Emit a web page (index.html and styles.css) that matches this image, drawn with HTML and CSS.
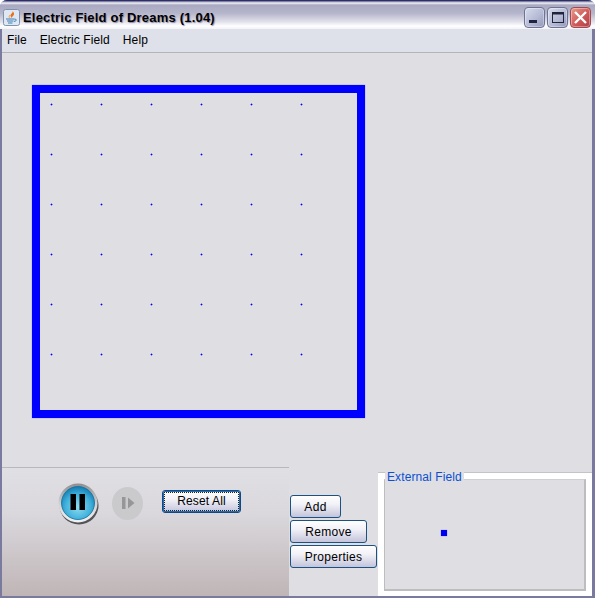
FILE: index.html
```html
<!DOCTYPE html>
<html lang="en">
<head>
<meta charset="utf-8">
<title>Electric Field of Dreams (1.04)</title>
<link rel="stylesheet" href="styles.css">
</head>
<body>
<div class="window">
  <header class="titlebar">
    <svg class="app-icon" width="17" height="17" viewBox="0 0 17 17">
      <rect x="0.5" y="0.5" width="16" height="16" rx="2" fill="#dfe8f2" stroke="#7f93ad"/>
      <path d="M9.5 2C10.5 4 7 5 7.5 7C7.8 8.2 9 9 9 9C8.5 7.5 11.5 6.5 11 4.5C10.8 3.5 10 2.6 9.5 2Z" fill="#e8701a"/>
      <path d="M7 6C5.8 7 5.8 8.2 7 9.4" fill="none" stroke="#f0a040"/>
      <path d="M3 10H11.5M4 12H10.5M5 14H9.5" stroke="#3f7fb5" stroke-width="1.2"/>
      <path d="M11.5 10.2C14 9.8 14 12.2 11 12.4" fill="none" stroke="#3f7fb5"/>
    </svg>
    <h1 class="title">Electric Field of Dreams (1.04)</h1>
    <div class="win-controls">
      <div class="win-btn">
        <svg width="19" height="19" viewBox="0 0 19 19"><rect x="4" y="12" width="8" height="3" fill="#20243c"/></svg>
      </div>
      <div class="win-btn">
        <svg width="19" height="19" viewBox="0 0 19 19"><rect x="4.5" y="4.5" width="11" height="10" fill="none" stroke="#20243c"/><rect x="4" y="4" width="12" height="2.5" fill="#20243c"/></svg>
      </div>
      <div class="win-btn win-close">
        <svg width="19" height="19" viewBox="0 0 19 19"><path d="M4 4L15 15M15 4L4 15" stroke="#fff" stroke-width="2.4"/></svg>
      </div>
    </div>
  </header>
  <nav class="menubar">
    <span class="menu-item">File</span>
    <span class="menu-item">Electric Field</span>
    <span class="menu-item">Help</span>
  </nav>
  <main class="content">
    <section class="stage">
      <div class="field">
        <i class="dot"></i><i class="dot"></i><i class="dot"></i><i class="dot"></i><i class="dot"></i><i class="dot"></i>
        <i class="dot"></i><i class="dot"></i><i class="dot"></i><i class="dot"></i><i class="dot"></i><i class="dot"></i>
        <i class="dot"></i><i class="dot"></i><i class="dot"></i><i class="dot"></i><i class="dot"></i><i class="dot"></i>
        <i class="dot"></i><i class="dot"></i><i class="dot"></i><i class="dot"></i><i class="dot"></i><i class="dot"></i>
        <i class="dot"></i><i class="dot"></i><i class="dot"></i><i class="dot"></i><i class="dot"></i><i class="dot"></i>
        <i class="dot"></i><i class="dot"></i><i class="dot"></i><i class="dot"></i><i class="dot"></i><i class="dot"></i>
      </div>
    </section>
    <section class="bottom">
      <div class="transport">
        <svg class="pause" width="42" height="42" viewBox="0 0 42 42">
          <defs>
            <radialGradient id="blue" cx="50%" cy="62%" r="60%">
              <stop offset="0" stop-color="#8fdcf2"/>
              <stop offset="0.65" stop-color="#3fb0da"/>
              <stop offset="1" stop-color="#167fb4"/>
            </radialGradient>
            <linearGradient id="ring" x1="0" y1="0" x2="0" y2="1">
              <stop offset="0" stop-color="#8e8e90"/>
              <stop offset="0.5" stop-color="#d0d0d2"/>
              <stop offset="1" stop-color="#f2f2f2"/>
            </linearGradient>
          </defs>
          <ellipse cx="21" cy="22.5" rx="19.5" ry="19" fill="#3c3c40" opacity="0.85"/>
          <circle cx="20" cy="20" r="19.5" fill="url(#ring)"/>
          <circle cx="20" cy="20" r="16.5" fill="url(#blue)" stroke="#0f6f9f" stroke-width="0.8"/>
          <rect x="12.5" y="11" width="5.5" height="16" fill="#000"/>
          <rect x="21.5" y="11" width="5.5" height="16" fill="#000"/>
        </svg>
        <svg class="step" width="31" height="33" viewBox="0 0 31 33">
          <ellipse cx="15.5" cy="16.5" rx="15.5" ry="16.5" fill="#cacacd"/>
          <rect x="10" y="10" width="3.5" height="12" fill="#969698"/>
          <path d="M16 10.5L22.5 16L16 21.5Z" fill="#969698"/>
        </svg>
        <button class="btn btn-reset" type="button"><span class="focus-ring">Reset All</span></button>
      </div>
      <div class="actions">
        <button class="btn btn-add" type="button">Add</button>
        <button class="btn btn-remove" type="button">Remove</button>
        <button class="btn btn-props" type="button">Properties</button>
      </div>
      <div class="external">
        <span class="external-title">External Field</span>
        <div class="external-inner"><i class="charge"></i></div>
      </div>
    </section>
  </main>
</div>
</body>
</html>
```
FILE: styles.css
```css
* { box-sizing: border-box; }
html, body { margin: 0; padding: 0; background: #fff; }
body { width: 597px; height: 600px; overflow: hidden; font-family: "Liberation Sans", Arial, sans-serif; font-size: 12px; color: #000; }

.window {
  width: 595px;
  height: 598px;
  display: flex;
  flex-direction: column;
  background: #7a7a9e;
  border-radius: 7px 7px 0 0;
  overflow: hidden;
}

.titlebar {
  height: 29px;
  flex: none;
  display: flex;
  align-items: center;
  padding: 5px 4px 0 3px;
  border-top: 1px solid #2c2f66;
  background: linear-gradient(to bottom, #5b5b8c 0, #f4f4f8 2px, #a9a9c2 4px, #b4b4ca 12px, #e2e2ec 21px, #ffffff 25px, #f2f2f8 28px);
}
.app-icon { flex: none; display: block; }
.title {
  margin: 0 0 0 3px;
  font-family: "Liberation Sans", sans-serif;
  font-size: 13px;
  font-weight: bold;
  line-height: 18px;
  color: #000;
  letter-spacing: 0.2px;
  text-shadow: 1px 1px 1px #8c8ca8;
  white-space: nowrap;
}
.win-controls { margin-left: auto; display: flex; gap: 2px; }
.win-btn {
  width: 21px;
  height: 21px;
  border: 1px solid #6d7392;
  border-radius: 4px;
  background: linear-gradient(135deg, #d8dcec 0%, #b6bbd6 55%, #9398ba 100%);
  box-shadow: inset 0 0 0 1px rgba(255,255,255,.35);
}
.win-btn svg { display: block; margin: 0; }
.win-close {
  border-color: #a04a50;
  background: linear-gradient(135deg, #e89a8e 0%, #cf5a58 55%, #b23c44 100%);
}

.menubar {
  height: 24px;
  flex: none;
  margin: 0 3px 0 2px;
  display: flex;
  align-items: center;
  gap: 13px;
  padding: 0 0 1px 5px;
  background: #dfe1ea;
  border-bottom: 1px solid #b4b4b8;
  letter-spacing: 0.1px;
}

.content {
  flex: 1;
  display: flex;
  flex-direction: column;
  margin: 0 3px 2px 2px;
  background: #dfdee3;
  min-height: 0;
}

.stage { height: 414px; flex: none; padding: 32px 0 0 30px; }
.field {
  width: 333px;
  height: 333px;
  border: 8px solid #0000ff;
  padding: 10px 0 0 10px;
  display: grid;
  grid-template-columns: repeat(6, 50px);
  grid-auto-rows: 50px;
  box-shadow: 0 0 1px #6a6af0;
}
.dot {
  display: block;
  width: 1px;
  height: 1px;
  margin: 1px 0 0 1px;
  background: #0000ff;
  box-shadow: 1px 0 rgba(40, 40, 255, .45), -1px 0 rgba(40, 40, 255, .45), 0 1px rgba(40, 40, 255, .45), 0 -1px rgba(40, 40, 255, .45);
}

.bottom { flex: 1; display: flex; min-height: 0; }

.transport {
  width: 287px;
  flex: none;
  display: flex;
  align-items: flex-start;
  padding: 15px 0 0 56px;
  border-top: 1px solid #b9b8bd;
  background: linear-gradient(to bottom, #e0dfe4 0%, #dad8dd 35%, #bfb5b6 100%);
}
.pause { flex: none; display: block; }
.step { flex: none; display: block; margin: 4px 0 0 12px; }

.btn {
  display: block;
  height: 23px;
  padding: 0;
  border: 1px solid #1c527f;
  border-radius: 3px;
  background: linear-gradient(to bottom, #ffffff 0%, #f1f1f7 40%, #c4c4dc 100%);
  font-family: "Liberation Sans", Arial, sans-serif;
  font-size: 12px;
  color: #000;
  letter-spacing: 0.3px;
}
.btn-reset { width: 79px; margin: 7px 0 0 19px; padding: 1px; border: 1px solid #0f4a86; box-shadow: inset 0 0 0 1px #2a6aa8; letter-spacing: 0.15px; }
.focus-ring { display: block; height: 19px; line-height: 17px; margin: 0; border: 1px dotted #222; }

.actions { width: 89px; flex: none; display: flex; flex-direction: column; gap: 2px; padding: 28px 0 0 1px; }
.btn-add { width: 51px; }
.btn-remove { width: 77px; }
.btn-props { width: 87px; }

.external {
  position: relative;
  width: 214px;
  flex: none;
  margin-top: 5px;
  padding: 6px 6px 5px 6px;
  background: #fff;
  border-top: 1px solid #c4c4c6;
}
.external-title {
  position: absolute;
  left: 7px;
  top: -2px;
  padding: 0 2px;
  height: 12px;
  line-height: 12px;
  background: #dfdee3;
  color: #0b50d2;
  letter-spacing: 0.1px;
}
.external-inner {
  height: 100%;
  display: flex;
  padding: 50px 0 0 56px;
  background: #dfdee3;
  border: 1px solid #d0d0d2;
  border-right: 2px solid #bdbdbf;
  border-bottom: 2px solid #bdbdbf;
  border-left-color: #bdbdbf;
}
.charge { display: block; width: 6px; height: 6px; background: #0000f0; box-shadow: 0 0 1px #7070f0; }
```
